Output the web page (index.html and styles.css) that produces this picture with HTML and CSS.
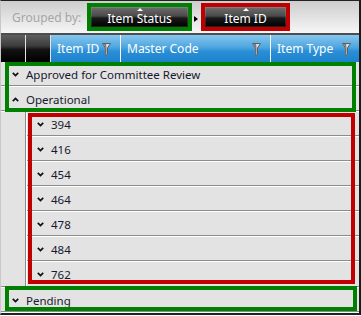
FILE: index.html
```
<!DOCTYPE html>
<html>
<head>
    <title>Grouped grid</title>
    <meta charset="utf-8">
    <link rel="stylesheet" href="styles.css">
</head>
<body>
    <div class="grid">
        <div class="group-panel">
            <span class="group-label">Grouped by:</span>
            <div class="chip-frame frame-green">
                <div class="chip chip-status"><span class="sort-up"></span><span>Item Status</span></div>
            </div>
            <span class="chip-arrow"></span>
            <div class="chip-frame frame-red">
                <div class="chip chip-id"><span class="sort-up"></span><span>Item ID</span></div>
            </div>
        </div>

        <div class="header">
            <div class="hdr-block"></div>
            <div class="hdr-block"></div>
            <div class="hdr-col col-id">
                <span>Item ID</span>
                <svg class="filter" width="9" height="13" viewBox="0 0 9 13"><path d="M0.5 0.5 H8.5 L5.5 5 V11.5 L3.5 12.5 V5 Z" fill="#dcdcdc" stroke="#5e5e5e" stroke-width="1"/><path d="M1.5 1 H4 L4.5 5 V12 L3.5 12.5 V5 Z" fill="#7e7e7e"/></svg>
            </div>
            <div class="hdr-col col-code">
                <span>Master Code</span>
                <svg class="filter" width="9" height="13" viewBox="0 0 9 13"><path d="M0.5 0.5 H8.5 L5.5 5 V11.5 L3.5 12.5 V5 Z" fill="#dcdcdc" stroke="#5e5e5e" stroke-width="1"/><path d="M1.5 1 H4 L4.5 5 V12 L3.5 12.5 V5 Z" fill="#7e7e7e"/></svg>
            </div>
            <div class="hdr-col col-type">
                <span>Item Type</span>
                <svg class="filter" width="9" height="13" viewBox="0 0 9 13"><path d="M0.5 0.5 H8.5 L5.5 5 V11.5 L3.5 12.5 V5 Z" fill="#dcdcdc" stroke="#5e5e5e" stroke-width="1"/><path d="M1.5 1 H4 L4.5 5 V12 L3.5 12.5 V5 Z" fill="#7e7e7e"/></svg>
            </div>
        </div>

        <div class="rows">
            <div class="row group-row">
                <svg class="chev" width="7" height="5" viewBox="0 0 7 5"><path d="M0.8 0.8 L3.5 3.6 L6.2 0.8" fill="none" stroke="#111" stroke-width="1.7"/></svg>
                <span>Approved for Committee Review</span>
            </div>
            <div class="row group-row">
                <svg class="chev" width="7" height="5" viewBox="0 0 7 5"><path d="M0.8 4.2 L3.5 1.4 L6.2 4.2" fill="none" stroke="#111" stroke-width="1.7"/></svg>
                <span>Operational</span>
            </div>
            <div class="sub-group">
                <div class="sub-indent"></div>
                <div class="sub-rows">
                    <div class="row sub-row"><svg class="chev" width="7" height="5" viewBox="0 0 7 5"><path d="M0.8 0.8 L3.5 3.6 L6.2 0.8" fill="none" stroke="#111" stroke-width="1.7"/></svg><span>394</span></div>
                    <div class="row sub-row"><svg class="chev" width="7" height="5" viewBox="0 0 7 5"><path d="M0.8 0.8 L3.5 3.6 L6.2 0.8" fill="none" stroke="#111" stroke-width="1.7"/></svg><span>416</span></div>
                    <div class="row sub-row"><svg class="chev" width="7" height="5" viewBox="0 0 7 5"><path d="M0.8 0.8 L3.5 3.6 L6.2 0.8" fill="none" stroke="#111" stroke-width="1.7"/></svg><span>454</span></div>
                    <div class="row sub-row"><svg class="chev" width="7" height="5" viewBox="0 0 7 5"><path d="M0.8 0.8 L3.5 3.6 L6.2 0.8" fill="none" stroke="#111" stroke-width="1.7"/></svg><span>464</span></div>
                    <div class="row sub-row"><svg class="chev" width="7" height="5" viewBox="0 0 7 5"><path d="M0.8 0.8 L3.5 3.6 L6.2 0.8" fill="none" stroke="#111" stroke-width="1.7"/></svg><span>478</span></div>
                    <div class="row sub-row"><svg class="chev" width="7" height="5" viewBox="0 0 7 5"><path d="M0.8 0.8 L3.5 3.6 L6.2 0.8" fill="none" stroke="#111" stroke-width="1.7"/></svg><span>484</span></div>
                    <div class="row sub-row last"><svg class="chev" width="7" height="5" viewBox="0 0 7 5"><path d="M0.8 0.8 L3.5 3.6 L6.2 0.8" fill="none" stroke="#111" stroke-width="1.7"/></svg><span>762</span></div>
                </div>
            </div>
            <div class="row group-row">
                <svg class="chev" width="7" height="5" viewBox="0 0 7 5"><path d="M0.8 0.8 L3.5 3.6 L6.2 0.8" fill="none" stroke="#111" stroke-width="1.7"/></svg>
                <span>Pending</span>
            </div>
        </div>

        <div class="mark mark-groups"></div>
        <div class="mark mark-items"></div>
        <div class="mark mark-pending"></div>
    </div>
</body>
</html>
```

FILE: styles.css
```
body {
    margin: 0;
    background-color: #fff;
    font-family: "Noto Sans", "Open Sans", sans-serif;
    font-size: 11.5px;
}
.grid {
    position: relative;
    width: 358px;
    height: 312px;
    border-top: 1px solid #222;
    border-right: 2px solid #1a1a1a;
    border-bottom: 2px solid #222;
    border-left: 1px solid #c8c8c8;
    background-color: #e3e3e3;
    overflow: hidden;
}
.group-panel {
    height: 32px;
    display: flex;
    align-items: center;
    padding-left: 11px;
    background: linear-gradient(#cdcdcd, #f6f6f6);
    border-bottom: 2px solid #4d4d4d;
}
.group-label {
    width: 75px;
    color: #a6a6a6;
    font-size: 12px;
}
.chip-frame {
    box-sizing: border-box;
    height: 28px;
    border: 4px solid;
}
.frame-green {
    width: 105px;
    border-color: #008000;
}
.frame-red {
    width: 89px;
    border-color: #c00000;
}
.chip {
    height: 20px;
    display: flex;
    flex-direction: column;
    align-items: center;
    color: #fff;
    font-size: 12px;
    line-height: 15px;
    background: linear-gradient(#6e6e6e 0%, #4a4a4a 45%, #1a1a1a 55%, #000 100%);
    box-shadow: inset 0 0 0 1px rgba(255,255,255,0.12);
}
.sort-up {
    margin-top: 1px;
    width: 0;
    height: 0;
    border-left: 3px solid transparent;
    border-right: 3px solid transparent;
    border-bottom: 3px solid #fff;
}
.chip-arrow {
    width: 0;
    height: 0;
    margin: 3px 3px 0 2px;
    border-top: 3.5px solid transparent;
    border-bottom: 3.5px solid transparent;
    border-left: 4px solid #000;
}
.header {
    height: 27px;
    display: flex;
}
.hdr-block {
    width: 24px;
    margin-right: 1px;
    background: linear-gradient(#5e5e5e 0%, #3c3c3c 40%, #111 55%, #000 100%);
}
.hdr-col {
    box-sizing: border-box;
    display: flex;
    align-items: center;
    justify-content: space-between;
    padding: 0 9px 0 6px;
    color: #fff;
    font-size: 12px;
    background: linear-gradient(#86c6ee 0%, #4fa6e0 45%, #2a8fd6 60%, #1c82cc 100%);
}
.col-id {
    width: 70px;
    border-right: 1px solid #fff;
}
.col-code {
    width: 150px;
    border-right: 1px solid #fff;
}
.col-type {
    flex: 1;
    padding-right: 8px;
}
.filter {
    margin-top: 1px;
}
.row {
    box-sizing: border-box;
    height: 25px;
    display: flex;
    align-items: center;
    gap: 7px;
    color: #18182e;
    border-bottom: 1px solid #fff;
    box-shadow: inset 0 -1px 0 #8c8c8c;
}
.group-row {
    padding-left: 11px;
}
.sub-group {
    display: flex;
    border-bottom: 1px solid #fff;
    box-shadow: inset 0 -1px 0 #8c8c8c;
}
.sub-indent {
    width: 24px;
    border-right: 1px solid #8c8c8c;
}
.sub-rows {
    flex: 1;
    border-left: 1px solid #fff;
}
.sub-row {
    padding-left: 10px;
}
.sub-row.last {
    border-bottom: none;
    box-shadow: none;
}
.chev {
    flex-shrink: 0;
}
.mark {
    position: absolute;
    box-sizing: border-box;
    border: 4px solid;
}
.mark-groups {
    left: 4px;
    top: 61px;
    width: 351px;
    height: 50px;
    border-color: #008000;
}
.mark-items {
    left: 27px;
    top: 112px;
    width: 327px;
    height: 171px;
    border-color: #c00000;
}
.mark-pending {
    left: 4px;
    top: 285px;
    width: 352px;
    height: 25px;
    border-color: #008000;
}
```
